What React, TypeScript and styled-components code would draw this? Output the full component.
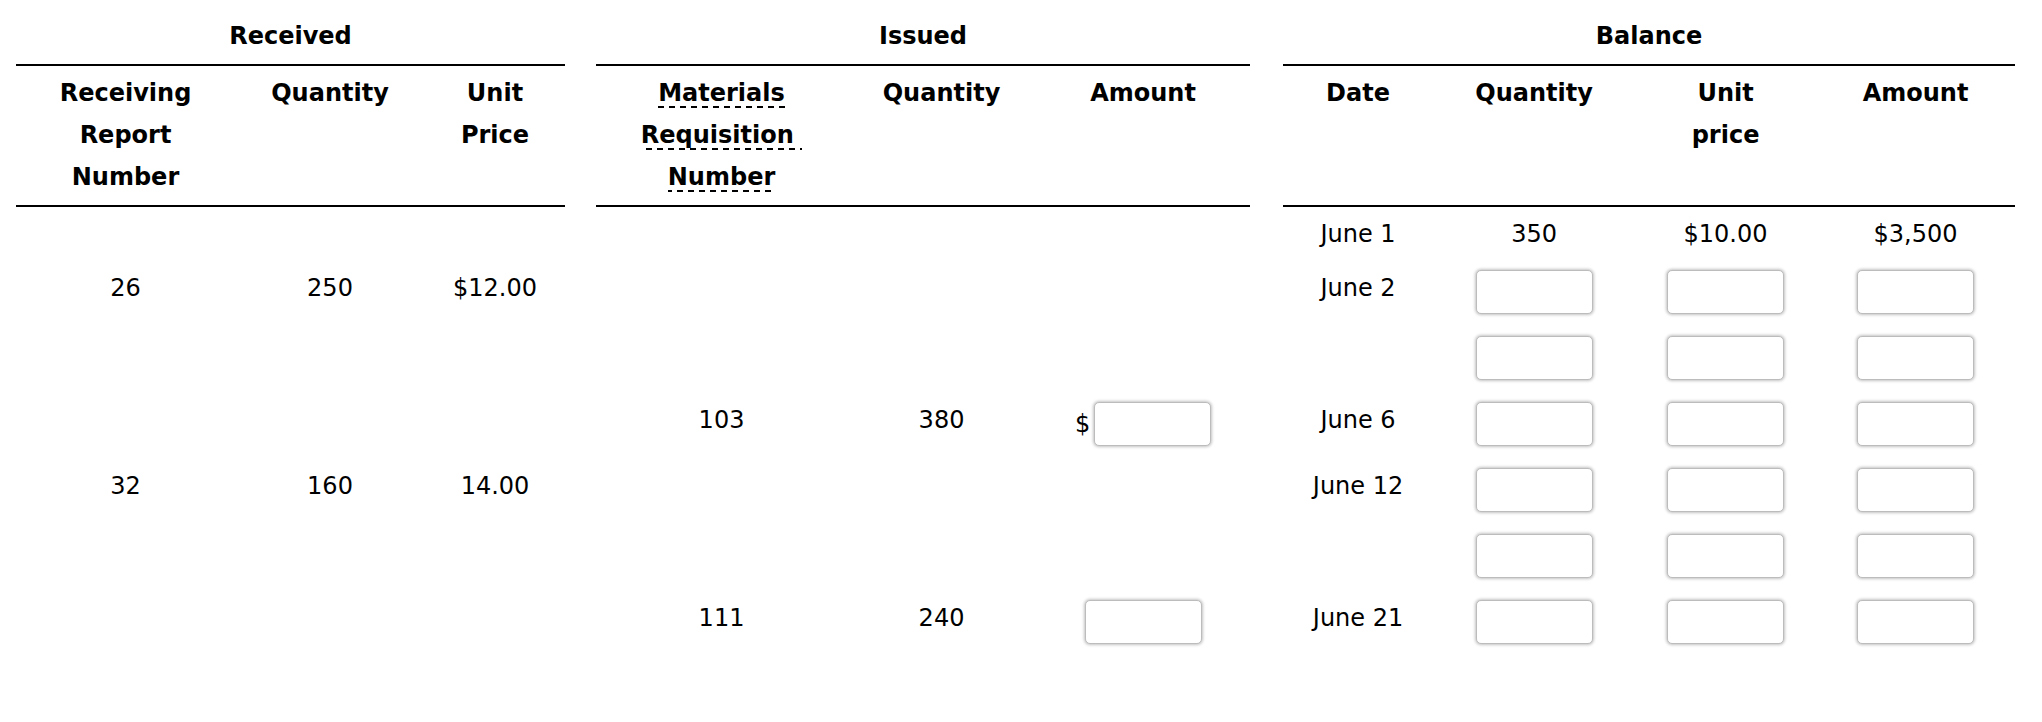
import React from 'react'
import styled, { createGlobalStyle } from 'styled-components'

const GlobalStyle = createGlobalStyle`
    body {
        margin: 0;
        background: #fff;
        color: #000;
        font-family: "DejaVu Sans", Verdana, sans-serif;
    }
`;

const Page = styled.div`
    padding: 0 16px;
`;

const Ledger = styled.table`
    table-layout: fixed;
    width: 1999px;
    border-collapse: separate;
    border-spacing: 0;
    font-size: 24px;
`;

const Col = styled.col<{ $w: number }>`
    width: ${p => p.$w}px;
`;

const GroupTitle = styled.th<{ $ruled?: boolean }>`
    padding: 22px 0 14px;
    line-height: 28px;
    font-weight: bold;
    text-align: center;
    border-bottom: 2px solid ${p => (p.$ruled ? '#000' : 'transparent')};
`;

const ColHead = styled.th<{ $ruled?: boolean }>`
    padding: 6px 0 7px;
    line-height: 42px;
    font-weight: bold;
    text-align: center;
    vertical-align: top;
    border-bottom: 2px solid ${p => (p.$ruled ? '#000' : 'transparent')};
`;

const Term = styled.span`
    padding-bottom: 1px;
    background-image: repeating-linear-gradient(to right, #000 0 6px, transparent 6px 11px);
    background-size: 100% 2px;
    background-position: left bottom;
    background-repeat: no-repeat;
`;

const Cell = styled.td<{ $lead?: boolean }>`
    padding: ${p => (p.$lead ? '13px 0 11px' : '7px 0 15px')};
    line-height: 28px;
    text-align: center;
    vertical-align: middle;
    white-space: nowrap;
`;

const FieldCell = styled.td`
    padding: 11px 0;
    text-align: center;
    vertical-align: middle;
`;

const Money = styled.span`
    display: inline-flex;
    align-items: center;
    gap: 4px;
`;

const Field = styled.input`
    box-sizing: border-box;
    width: 117px;
    height: 44px;
    margin: 0;
    padding: 0 8px;
    border: 1px solid #bcbcbc;
    border-radius: 5px;
    background: #fff;
    box-shadow: 0 0 3px 1px rgba(0, 0, 0, 0.24);
    font: inherit;
    vertical-align: middle;
`;

type Issue = {
    req: string;
    qty: string;
    dollar: boolean;
}

type Row = {
    received?: [string, string, string];
    issued?: Issue;
    date?: string;
    balance?: [string, string, string];
}

const rows: Row[] = [
    { date: 'June 1', balance: ['350', '$10.00', '$3,500'] },
    { received: ['26', '250', '$12.00'], date: 'June 2' },
    {},
    { issued: { req: '103', qty: '380', dollar: true }, date: 'June 6' },
    { received: ['32', '160', '14.00'], date: 'June 12' },
    {},
    { issued: { req: '111', qty: '240', dollar: false }, date: 'June 21' },
];

const widths = [219, 190, 140, 31, 251, 189, 214, 33, 150, 202, 181, 199];

const LedgerRow: React.FC<{ row: Row; lead: boolean }> = ({ row, lead }) => {
    const rec = row.received;
    const iss = row.issued;
    return (
        <tr>
            <Cell $lead={lead}>{rec ? rec[0] : ''}</Cell>
            <Cell $lead={lead}>{rec ? rec[1] : ''}</Cell>
            <Cell $lead={lead}>{rec ? rec[2] : ''}</Cell>
            <Cell $lead={lead} />
            <Cell $lead={lead}>{iss ? iss.req : ''}</Cell>
            <Cell $lead={lead}>{iss ? iss.qty : ''}</Cell>
            {iss ? (
                <FieldCell>
                    {iss.dollar
                        ? <Money>$<Field type="text" /></Money>
                        : <Field type="text" />}
                </FieldCell>
            ) : <Cell $lead={lead} />}
            <Cell $lead={lead} />
            <Cell $lead={lead}>{row.date || ''}</Cell>
            {row.balance
                ? row.balance.map((v, i) => <Cell $lead={lead} key={i}>{v}</Cell>)
                : [0, 1, 2].map(i => <FieldCell key={i}><Field type="text" /></FieldCell>)}
        </tr>
    )
}

const App: React.FC = () => {
    return (
        <Page>
            <GlobalStyle />
            <Ledger>
                <colgroup>
                    { widths.map((w, i) => <Col $w={w} key={i} />) }
                </colgroup>
                <thead>
                    <tr>
                        <GroupTitle colSpan={3} $ruled>Received</GroupTitle>
                        <GroupTitle />
                        <GroupTitle colSpan={3} $ruled>Issued</GroupTitle>
                        <GroupTitle />
                        <GroupTitle colSpan={4} $ruled>Balance</GroupTitle>
                    </tr>
                    <tr>
                        <ColHead $ruled>Receiving<br />Report<br />Number</ColHead>
                        <ColHead $ruled>Quantity</ColHead>
                        <ColHead $ruled>Unit<br />Price</ColHead>
                        <ColHead />
                        <ColHead $ruled>
                            <Term>Materials<br />Requisition{'\u00a0'}<br />Number</Term>
                        </ColHead>
                        <ColHead $ruled>Quantity</ColHead>
                        <ColHead $ruled>Amount</ColHead>
                        <ColHead />
                        <ColHead $ruled>Date</ColHead>
                        <ColHead $ruled>Quantity</ColHead>
                        <ColHead $ruled>Unit<br />price</ColHead>
                        <ColHead $ruled>Amount</ColHead>
                    </tr>
                </thead>
                <tbody>
                    { rows.map((row, i) => <LedgerRow row={row} lead={i === 0} key={i} />) }
                </tbody>
            </Ledger>
        </Page>
    )
}

export default App
